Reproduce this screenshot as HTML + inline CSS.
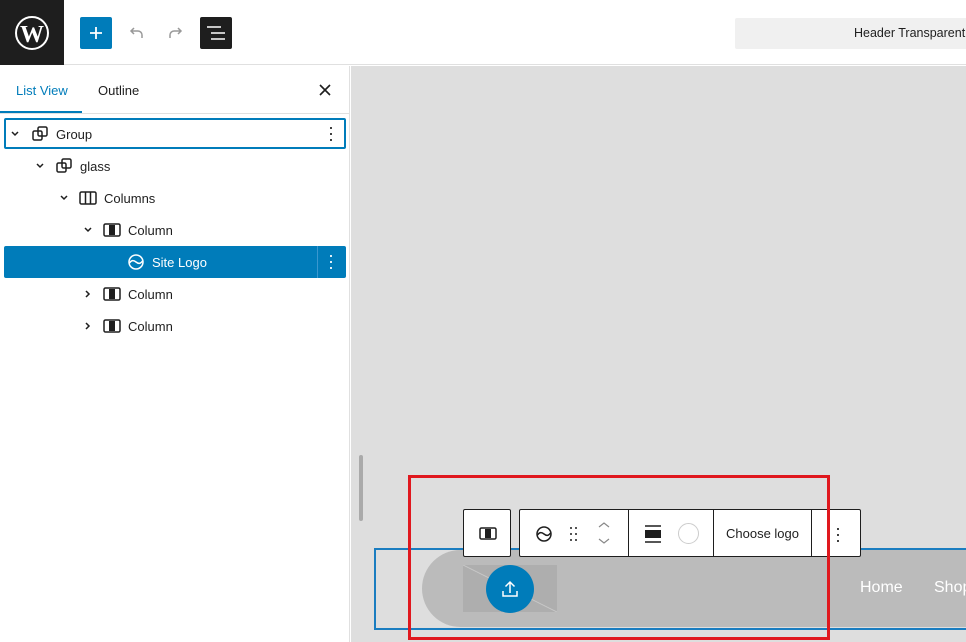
<!DOCTYPE html>
<html><head><style>
*{box-sizing:border-box;margin:0;padding:0}
body{width:966px;height:642px;overflow:hidden;font-family:"Liberation Sans",sans-serif;font-size:13px;color:#1e1e1e;background:#fff;position:relative}
.abs{position:absolute}
.row{position:absolute;left:4px;width:342px;height:32px;display:flex;align-items:center;font-size:13px}
.row svg{flex:none}
</style></head><body>
<div class="abs" style="left:0;top:0;width:966px;height:65px;border-bottom:1px solid #e0e0e0;background:#fff"></div>
<div class="abs" style="left:0;top:0;width:64px;height:65px;background:#1e1e1e">
<svg class="abs" style="left:14px;top:15px" width="36" height="36" viewBox="0 0 36 36"><circle cx="18" cy="18" r="16" fill="none" stroke="#fff" stroke-width="2"/><text x="18" y="27" font-family="Liberation Serif" font-size="24" font-weight="bold" fill="#fff" text-anchor="middle">W</text></svg></div>
<div class="abs" style="left:80px;top:17px;width:32px;height:32px;background:#007cba;border-radius:2px"><svg width="32" height="32"><path d="M16 10v12M10 16h12" stroke="#fff" stroke-width="1.8"/></svg></div>
<svg class="abs" style="left:124px;top:20px" width="24" height="24"><path d="M18 18v-3a4 4 0 0 0-4-4H7M10 8l-3 3 3 3" fill="none" stroke="#999" stroke-width="1.5"/></svg>
<svg class="abs" style="left:164px;top:20px" width="24" height="24"><path d="M6 18v-3a4 4 0 0 1 4-4h7M14 8l3 3-3 3" fill="none" stroke="#999" stroke-width="1.5"/></svg>
<div class="abs" style="left:200px;top:17px;width:32px;height:32px;background:#1e1e1e;border-radius:2px"><svg width="32" height="32"><path d="M7 10h14M11 16h14M11 22h14" stroke="#fff" stroke-width="1.6"/></svg></div>
<div class="abs" style="left:735px;top:18px;width:240px;height:31px;background:#f0f0f0;border-radius:2px;padding:8px 0 0 119px;font-size:12.5px;white-space:nowrap">Header Transparent</div>
<div class="abs" style="left:0;top:66px;width:350px;height:576px;background:#fff;border-right:1px solid #e0e0e0"></div>
<div class="abs" style="left:16px;top:83px;color:#007cba">List View</div>
<div class="abs" style="left:98px;top:83px">Outline</div>
<div class="abs" style="left:0;top:111px;width:82px;height:2px;background:#007cba"></div>
<div class="abs" style="left:0;top:113px;width:350px;height:1px;background:#e0e0e0"></div>
<svg class="abs" style="left:318px;top:83px" width="14" height="14"><path d="M2 2l10 10M12 2L2 12" stroke="#1e1e1e" stroke-width="1.6"/></svg>

<div class="row" style="top:118px;border:2px solid #007cba;border-radius:2px;height:31px"></div>
<svg class="abs" style="left:10px;top:129px" width="10" height="10"><path d="M2 3l3 3 3-3" fill="none" stroke="#1e1e1e" stroke-width="1.5"/></svg>
<svg class="abs" style="left:31px;top:125px" width="18" height="18"><rect x="2" y="6" width="9" height="9" rx="1.5" fill="none" stroke="#1e1e1e" stroke-width="1.5"/><rect x="7" y="2" width="9" height="9" rx="1.5" fill="none" stroke="#1e1e1e" stroke-width="1.5"/></svg>
<div class="abs" style="left:56px;top:127px">Group</div>
<div class="abs" style="left:328px;top:124px;font-size:18px;line-height:6px;width:4px">·<br>·<br>·</div>

<svg class="abs" style="left:35px;top:161px" width="10" height="10"><path d="M2 3l3 3 3-3" fill="none" stroke="#1e1e1e" stroke-width="1.5"/></svg>
<svg class="abs" style="left:55px;top:157px" width="18" height="18"><rect x="2" y="6" width="9" height="9" rx="1.5" fill="none" stroke="#1e1e1e" stroke-width="1.5"/><rect x="7" y="2" width="9" height="9" rx="1.5" fill="none" stroke="#1e1e1e" stroke-width="1.5"/></svg>
<div class="abs" style="left:80px;top:159px">glass</div>

<svg class="abs" style="left:59px;top:193px" width="10" height="10"><path d="M2 3l3 3 3-3" fill="none" stroke="#1e1e1e" stroke-width="1.5"/></svg>
<svg class="abs" style="left:79px;top:190px" width="18" height="16"><rect x="1" y="2" width="16" height="12" rx="1.5" fill="none" stroke="#1e1e1e" stroke-width="1.5"/><path d="M6.5 2v12M11.5 2v12" stroke="#1e1e1e" stroke-width="1.5"/></svg>
<div class="abs" style="left:104px;top:191px">Columns</div>

<svg class="abs" style="left:83px;top:225px" width="10" height="10"><path d="M2 3l3 3 3-3" fill="none" stroke="#1e1e1e" stroke-width="1.5"/></svg>
<svg class="abs" style="left:103px;top:222px" width="18" height="16"><rect x="1" y="2" width="16" height="12" rx="1.5" fill="none" stroke="#1e1e1e" stroke-width="1.5"/><rect x="6" y="3" width="6" height="10" fill="#1e1e1e"/></svg>
<div class="abs" style="left:128px;top:223px">Column</div>

<div class="abs" style="left:4px;top:246px;width:342px;height:32px;background:#007cba;border-radius:2px"></div>
<div class="abs" style="left:317px;top:246px;width:1px;height:32px;background:#3a97cf"></div>
<svg class="abs" style="left:127px;top:253px" width="18" height="18"><circle cx="9" cy="9" r="7" fill="none" stroke="#fff" stroke-width="1.5"/><path d="M2.5 10c2-3 4-3 6.5-1s4.5 2 6.5-1" fill="none" stroke="#fff" stroke-width="1.5"/></svg>
<div class="abs" style="left:152px;top:255px;color:#fff">Site Logo</div>
<div class="abs" style="left:328px;top:252px;font-size:18px;line-height:6px;width:4px;color:#fff">·<br>·<br>·</div>

<svg class="abs" style="left:83px;top:289px" width="10" height="10"><path d="M3 2l3 3-3 3" fill="none" stroke="#1e1e1e" stroke-width="1.5"/></svg>
<svg class="abs" style="left:103px;top:286px" width="18" height="16"><rect x="1" y="2" width="16" height="12" rx="1.5" fill="none" stroke="#1e1e1e" stroke-width="1.5"/><rect x="6" y="3" width="6" height="10" fill="#1e1e1e"/></svg>
<div class="abs" style="left:128px;top:287px">Column</div>
<svg class="abs" style="left:83px;top:321px" width="10" height="10"><path d="M3 2l3 3-3 3" fill="none" stroke="#1e1e1e" stroke-width="1.5"/></svg>
<svg class="abs" style="left:103px;top:318px" width="18" height="16"><rect x="1" y="2" width="16" height="12" rx="1.5" fill="none" stroke="#1e1e1e" stroke-width="1.5"/><rect x="6" y="3" width="6" height="10" fill="#1e1e1e"/></svg>
<div class="abs" style="left:128px;top:319px">Column</div>

<div class="abs" style="left:351px;top:66px;width:620px;height:576px;background:#dedede"></div>
<div class="abs" style="left:359px;top:455px;width:4px;height:66px;background:#aaa;border-radius:2px"></div>
<div class="abs" style="left:374px;top:548px;width:600px;height:82px;border:2px solid #1a7dc0"></div>
<div class="abs" style="left:422px;top:550px;width:560px;height:77px;background:#bbb;border-radius:39px 0 0 39px"></div>
<div class="abs" style="left:463px;top:565px;width:94px;height:47px;background:#aeaeae"><svg width="94" height="47"><path d="M0 0L94 47" stroke="#c8c8c8" stroke-width="1"/></svg></div>
<div class="abs" style="left:486px;top:565px;width:48px;height:48px;border-radius:50%;background:#007cba"><svg width="48" height="48"><path d="M24 17v11M19.5 21.5L24 17l4.5 4.5M17 26v5h14v-5" fill="none" stroke="#fff" stroke-width="1.5"/></svg></div>
<div class="abs" style="left:860px;top:579px;color:#fff;font-size:16px">Home</div>
<div class="abs" style="left:934px;top:579px;color:#fff;font-size:16px">Shop</div>
<div class="abs" style="left:463px;top:509px;width:48px;height:48px;background:#fff;border:1px solid #1e1e1e;border-radius:2px"><svg width="46" height="46"><rect x="16" y="18" width="16" height="11" rx="1.5" fill="none" stroke="#1e1e1e" stroke-width="1.5"/><rect x="21" y="19" width="6" height="9" fill="#1e1e1e"/></svg></div>
<div class="abs" style="left:519px;top:509px;width:342px;height:48px;background:#fff;border:1px solid #1e1e1e;border-radius:2px"></div>
<div class="abs" style="left:628px;top:510px;width:1px;height:46px;background:#1e1e1e"></div>
<div class="abs" style="left:713px;top:510px;width:1px;height:46px;background:#1e1e1e"></div>
<div class="abs" style="left:811px;top:510px;width:1px;height:46px;background:#1e1e1e"></div>
<svg class="abs" style="left:534px;top:524px" width="20" height="20"><circle cx="10" cy="10" r="7" fill="none" stroke="#1e1e1e" stroke-width="1.5"/><path d="M3.5 11c2-3 4-3 6.5-1s4.5 2 6.5-1" fill="none" stroke="#1e1e1e" stroke-width="1.5"/></svg>
<svg class="abs" style="left:567px;top:525px" width="14" height="18"><g fill="#1e1e1e"><circle cx="4" cy="3" r="1"/><circle cx="9" cy="3" r="1"/><circle cx="4" cy="9" r="1"/><circle cx="9" cy="9" r="1"/><circle cx="4" cy="15" r="1"/><circle cx="9" cy="15" r="1"/></g></svg>
<svg class="abs" style="left:596px;top:519px" width="16" height="28"><path d="M3 8l5-4 5 4M3 20l5 4 5-4" fill="none" stroke="#888" stroke-width="1.2"/></svg>
<svg class="abs" style="left:644px;top:524px" width="18" height="20"><path d="M1 2h16M1 18h16" stroke="#1e1e1e" stroke-width="1.5"/><rect x="1" y="6" width="16" height="8" fill="#1e1e1e"/></svg>
<div class="abs" style="left:678px;top:523px;width:21px;height:21px;border-radius:50%;border:1px solid #ccc;background:#fff"></div>
<div class="abs" style="left:726px;top:526px;font-size:13px">Choose logo</div>
<div class="abs" style="left:835px;top:525px;font-size:18px;line-height:6px;width:4px">·<br>·<br>·</div>
<div class="abs" style="left:408px;top:475px;width:422px;height:165px;border:3px solid #e0181e"></div>
</body></html>
